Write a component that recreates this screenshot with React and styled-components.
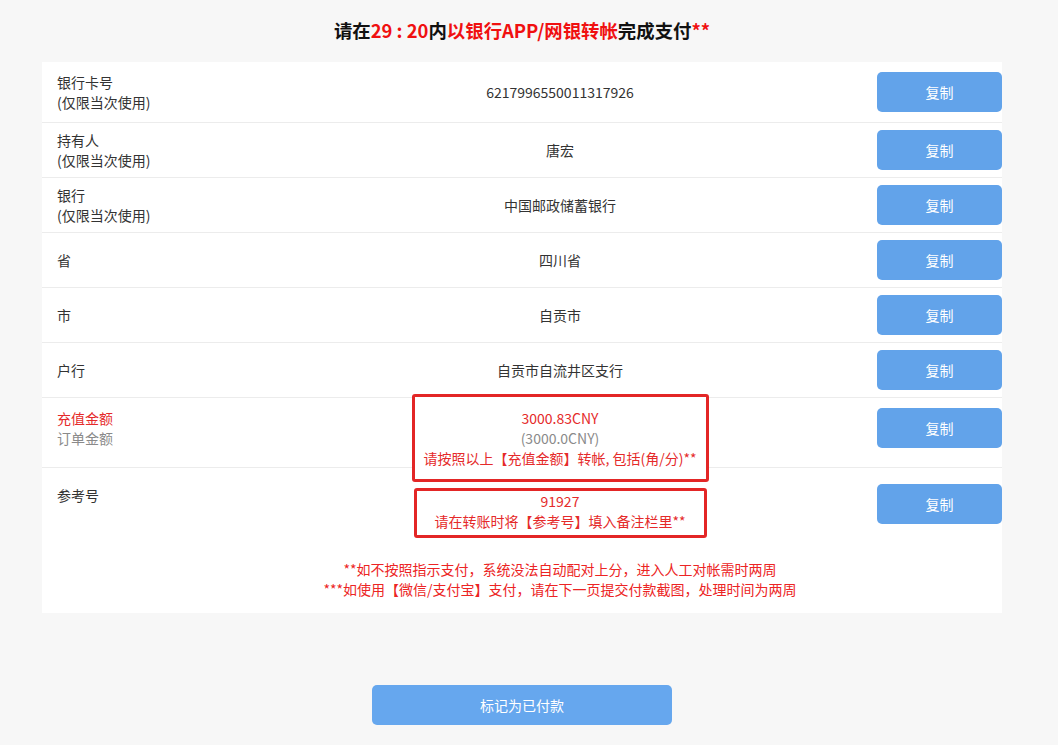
import styled, { createGlobalStyle } from "styled-components";

const GlobalStyle = createGlobalStyle`
  html, body {
    margin: 0;
    padding: 0;
    background: #f7f7f7;
    font-family: "Microsoft YaHei", "Noto Sans CJK SC", sans-serif;
  }
`;

const Page = styled.div`
  width: 1044px;
  padding-top: 19px;
  padding-bottom: 20px;
`;

const Title = styled.h1`
  margin: 0 0 21px;
  font-size: 18.4px;
  line-height: 22px;
  font-weight: 700;
  color: #111;
  text-align: center;
`;

const Red = styled.span`
  color: #f01010;
`;

const Card = styled.div`
  width: 960px;
  margin: 0 auto;
  background: #fff;
`;

const Row = styled.div`
  display: grid;
  grid-template-columns: 325px 356px 1fr;
  box-sizing: border-box;
  height: ${(p) => (p.h ? `${p.h}px` : "auto")};
  padding-left: 15px;
  align-items: ${(p) => (p.top ? "start" : "center")};
  border-bottom: ${(p) => (p.last ? "none" : "1px solid #ececec")};
  font-size: 14px;
  line-height: 20px;
  color: #333;
`;

const Label = styled.div`
  padding-top: ${(p) => p.pt || 0}px;
`;

const LabelLine = styled.div`
  color: ${(p) => p.color || "#333"};
`;

const Value = styled.div`
  text-align: center;
  color: #333;
`;

const NoticeBox = styled.div`
  justify-self: center;
  width: ${(p) => p.w}px;
  box-sizing: border-box;
  margin-top: ${(p) => p.mt}px;
  padding: ${(p) => p.pad};
  border: 3px solid #e32626;
  border-radius: 3px;
  background: #fff;
  text-align: center;
  line-height: 20px;
  color: #e52a2a;
`;

const Gray = styled.div`
  color: #8a8a8a;
`;

const CopyButton = styled.button`
  justify-self: end;
  width: 125px;
  height: 40px;
  margin-top: ${(p) => p.mt || 0}px;
  border: none;
  border-radius: 5px;
  background: #62a3ea;
  color: #fff;
  font-family: inherit;
  font-size: 14px;
  cursor: pointer;
`;

const Notes = styled.div`
  padding: 21px 0 14px 76px;
  text-align: center;
  font-size: 14px;
  line-height: 20px;
  color: #ec2424;
`;

const PaidButton = styled.button`
  display: block;
  width: 300px;
  height: 40px;
  margin: 72px auto 0;
  border: none;
  border-radius: 5px;
  background: #66a7ee;
  color: #fff;
  font-family: inherit;
  font-size: 14px;
  cursor: pointer;
`;

const rows = [
  { h: 61, label: ["银行卡号", "(仅限当次使用)"], value: "6217996550011317926" },
  { h: 55, label: ["持有人", "(仅限当次使用)"], value: "唐宏" },
  { h: 55, label: ["银行", "(仅限当次使用)"], value: "中国邮政储蓄银行" },
  { h: 55, label: ["省"], value: "四川省" },
  { h: 55, label: ["市"], value: "自贡市" },
  { h: 55, label: ["户行"], value: "自贡市自流井区支行" },
];

const App = () => {
  return (
    <Page>
      <GlobalStyle />
      <Title>
        请在<Red>29 : 20</Red>内<Red>以银行APP/网银转帐</Red>完成支付<Red>**</Red>
      </Title>
      <Card>
        {rows.map((r) => (
          <Row key={r.value} h={r.h}>
            <Label>
              {r.label.map((l) => (
                <LabelLine key={l}>{l}</LabelLine>
              ))}
            </Label>
            <Value>{r.value}</Value>
            <CopyButton>复制</CopyButton>
          </Row>
        ))}

        <Row h={70} top>
          <Label pt={10}>
            <LabelLine color="#e52a2a">充值金额</LabelLine>
            <LabelLine color="#8a8a8a">订单金额</LabelLine>
          </Label>
          <NoticeBox w={297} mt={-4} pad="11px 0">
            <div>3000.83CNY</div>
            <Gray>(3000.0CNY)</Gray>
            <div>请按照以上【充值金额】转帐, 包括(角/分)**</div>
          </NoticeBox>
          <CopyButton mt={10}>复制</CopyButton>
        </Row>

        <Row top last>
          <Label pt={17}>
            <LabelLine>参考号</LabelLine>
          </Label>
          <NoticeBox w={293} mt={20} pad="0 0 4px">
            <div>91927</div>
            <div>请在转账时将【参考号】填入备注栏里**</div>
          </NoticeBox>
          <CopyButton mt={16}>复制</CopyButton>
        </Row>

        <Notes>
          <div>**如不按照指示支付，系统没法自动配对上分，进入人工对帐需时两周</div>
          <div>***如使用【微信/支付宝】支付，请在下一页提交付款截图，处理时间为两周</div>
        </Notes>
      </Card>
      <PaidButton>标记为已付款</PaidButton>
    </Page>
  );
};

export default App;
